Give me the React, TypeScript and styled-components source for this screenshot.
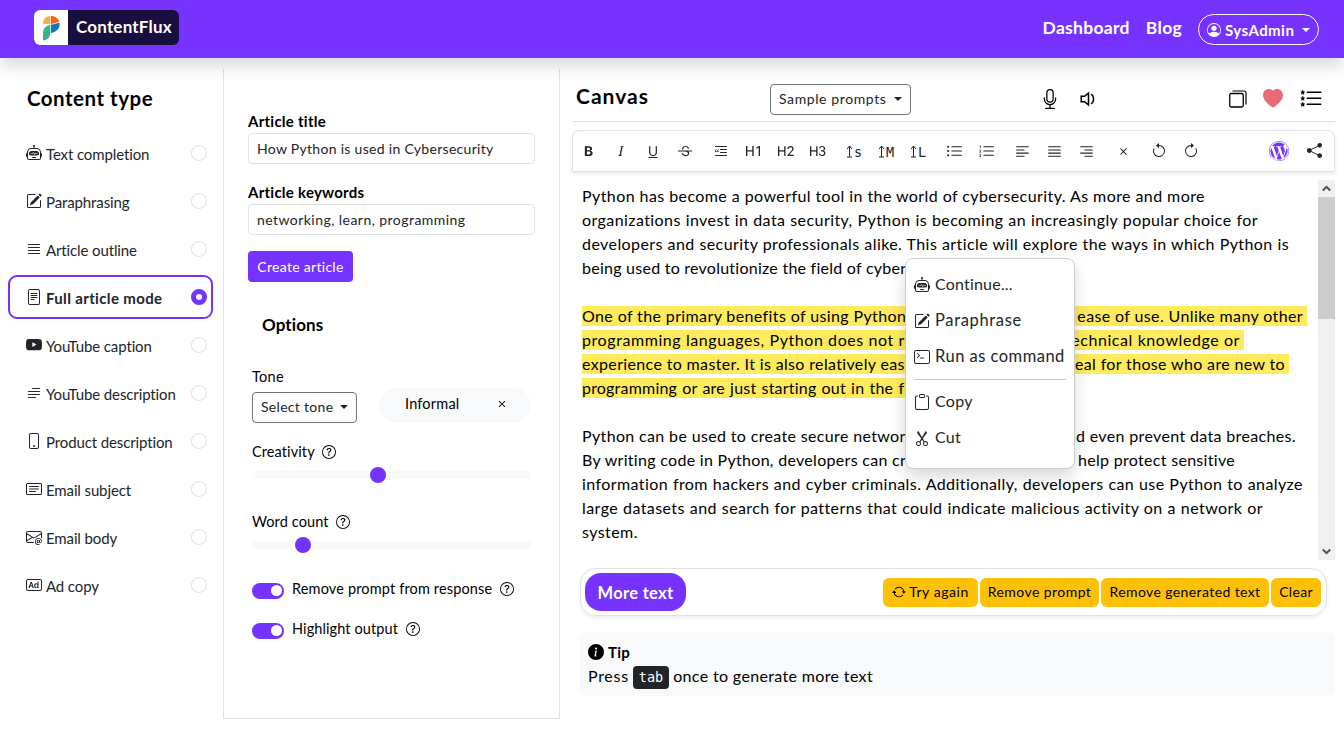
import React from "react";
import styled, { createGlobalStyle, css } from "styled-components";
import {
  BsRobot, BsPencilSquare, BsJustify, BsFileText, BsYoutube, BsTextParagraph, BsPhone, BsCardText,
  BsEnvelopeAt, BsBadgeAd, BsPersonCircle, BsMic, BsHeartFill, BsListStars, BsTypeBold,
  BsTypeItalic, BsTypeUnderline, BsTypeStrikethrough, BsBlockquoteLeft, BsTypeH1, BsTypeH2, BsTypeH3,
  BsListUl, BsListOl, BsTextLeft, BsTextRight, BsX, BsArrowCounterclockwise, BsArrowClockwise,
  BsWordpress, BsShareFill, BsQuestionCircle, BsInfoCircleFill, BsTerminal, BsClipboard, BsScissors,
  BsArrowRepeat,
} from "react-icons/bs";

const purple = "#7633ff";
const line = "#dee2e6";

const GlobalStyle = createGlobalStyle`
  * { box-sizing: border-box; }
  body {
    margin: 0;
    background: #fff;
    color: #000;
    font-family: Lato, "Open Sans", sans-serif;
    font-size: 16px;
    line-height: 24px;
    overflow: hidden;
  }
  svg { display: block; flex: none; }
  button { font: inherit; letter-spacing: inherit; cursor: pointer; }
`;

const Page = styled.div`
  height: 740px;
  display: flex;
  flex-direction: column;
`;

const Text = styled.span<{ $track?: number; $size?: number; $bold?: boolean }>`
  white-space: nowrap;
  letter-spacing: ${(p) => p.$track ?? 0.3}px;
  ${(p) => p.$size && css`font-size: ${p.$size}px;`}
  ${(p) => p.$bold && css`font-weight: 700;`}
`;

const Header = styled.header`
  position: relative;
  z-index: 2;
  height: 58px;
  flex: none;
  display: flex;
  justify-content: space-between;
  padding: 10px 25px 0 34px;
  background: ${purple};
  color: #fff;
  box-shadow: 0 8px 16px rgba(0, 0, 0, 0.15);
`;

const Brand = styled.div`
  display: flex;
  height: 35px;
  border-radius: 6px;
  overflow: hidden;
  background: #190f3f;
`;

const BrandMark = styled.div`
  width: 34px;
  background: #fff;
  display: flex;
  align-items: center;
  justify-content: center;
`;

const BrandName = styled.div`
  width: 111px;
  padding: 5px 0 0 8px;
`;

const Nav = styled.nav`
  display: flex;
  gap: 16px;
  padding-top: 4px;
`;

const NavLink = styled.a`
  line-height: 28px;
`;

const UserPill = styled.button`
  width: 121px;
  height: 31px;
  display: flex;
  align-items: center;
  gap: 4px;
  padding: 0 8px;
  border: 1px solid #f8f9fa;
  border-radius: 16px;
  background: none;
  color: #fff;
`;

const Caret = styled.span`
  margin-left: auto;
  border-top: 4.2px solid currentColor;
  border-left: 4.2px solid transparent;
  border-right: 4.2px solid transparent;
`;

const Columns = styled.div`
  flex: 1;
  display: flex;
  min-height: 0;
`;

const Sidebar = styled.aside`
  width: 223px;
  padding: 27px 10px 0 8px;
`;

const SidebarTitle = styled.h1`
  margin: 0 0 33px 19px;
  font-size: 20.5px;
  line-height: 26px;
  font-weight: 700;
`;

const TypeList = styled.div`
  display: flex;
  flex-direction: column;
  gap: 4px;
  margin-top: -13px;
`;

const TypeRow = styled.div<{ $active?: boolean }>`
  height: 44px;
  display: flex;
  align-items: center;
  padding: 0 4px 0 16px;
  gap: 4px;
  border: 2px solid ${(p) => (p.$active ? purple : "transparent")};
  border-radius: 9px;
  color: #212529;
`;

const TypeLabel = styled.span<{ $active?: boolean }>`
  flex: 1;
  padding-top: 1px;
  font-size: 15px;
  white-space: nowrap;
  letter-spacing: ${(p) => (p.$active ? 0.35 : -0.12)}px;
  font-weight: ${(p) => (p.$active ? 700 : 400)};
`;

const Radio = styled.span<{ $active?: boolean }>`
  width: 16px;
  height: 16px;
  border-radius: 50%;
  border: ${(p) => (p.$active ? `5px solid ${purple}` : `1px solid ${line}`)};
  background: #fff;
`;

const Settings = styled.section`
  width: 337px;
  height: 650px;
  margin-top: 11px;
  padding: 42px 24px 0;
  border: 1px solid ${line};
  border-top: 0;
`;

const FieldLabel = styled.label`
  display: block;
  padding-bottom: 1px;
  font-size: 15px;
  line-height: 21px;
  font-weight: 700;
  letter-spacing: 0.25px;
`;

const Field = styled.div`
  height: 31px;
  margin-bottom: 18px;
  padding: 0 8px;
  border: 1px solid ${line};
  border-radius: 4px;
  font-size: 14px;
  line-height: 30px;
  color: #212529;
`;

const PrimaryButton = styled.button`
  display: block;
  width: 105px;
  height: 31px;
  margin-top: -2px;
  padding: 0;
  border: 0;
  border-radius: 4px;
  background: ${purple};
  color: #fff;
`;

const OptionsTitle = styled.h2`
  margin: 30px 0 0 14px;
  font-size: 17px;
  line-height: 26px;
`;

const Options = styled.div`
  padding: 28px 4px 0;
`;

const OptionLine = styled.div<{ $h: number; $mt?: number }>`
  display: flex;
  align-items: center;
  gap: 7px;
  height: ${(p) => p.$h}px;
  margin-top: ${(p) => p.$mt ?? 0}px;
`;

const ToneRow = styled.div`
  display: flex;
  gap: 22px;
  height: 39px;
`;

const Dropdown = styled.button<{ $w: number }>`
  width: ${(p) => p.$w}px;
  height: 31px;
  display: flex;
  align-items: center;
  padding: 0 8px 2px;
  border: 1px solid #6c757d;
  border-radius: 4px;
  background: #fff;
  color: #212529;
`;

const ToneSelect = styled.div`
  padding-top: 4px;
`;

const ToneChip = styled.div`
  width: 152px;
  height: 35px;
  display: flex;
  align-items: center;
  justify-content: space-between;
  padding: 0 22px 3px 26px;
  border-radius: 18px;
  background: #f8f9fa;
`;

const Slider = styled.div`
  height: 16px;
  display: flex;
  align-items: center;
`;

const Track = styled.div`
  width: 279px;
  height: 8px;
  display: flex;
  align-items: center;
  border-radius: 4px;
  background: #f8f9fa;
`;

const Thumb = styled.span<{ $at: number }>`
  width: 16px;
  height: 16px;
  margin-left: ${(p) => p.$at}px;
  border-radius: 50%;
  background: ${purple};
`;

const Toggles = styled.div`
  padding-top: 16px;
`;

const ToggleRow = styled.div`
  display: flex;
  align-items: center;
  height: 40px;
  gap: 8px;
`;

const Toggle = styled.span`
  width: 32px;
  height: 16px;
  margin-top: 3px;
  padding: 2.5px;
  display: flex;
  justify-content: flex-end;
  border-radius: 8px;
  background: ${purple};
  &::after {
    content: "";
    width: 11px;
    height: 11px;
    border-radius: 50%;
    background: #fff;
  }
`;

const Canvas = styled.main`
  position: relative;
  flex: 1;
  min-width: 0;
  padding: 10px 9px 0 12px;
`;

const CanvasHead = styled.div`
  height: 54px;
  display: flex;
  align-items: center;
  padding: 10px 12px 0 4px;
  border-bottom: 1px solid ${line};
`;

const CanvasTitle = styled.h1`
  width: 194px;
  margin: 0;
  padding-bottom: 8px;
  font-size: 21px;
  line-height: 26px;
`;

const HeadIcons = styled.div<{ $gap: number; $ml: string }>`
  display: flex;
  align-items: center;
  gap: ${(p) => p.$gap}px;
  margin-left: ${(p) => p.$ml};
  padding-bottom: 1px;
`;

const Toolbar = styled.div`
  height: 42px;
  margin-top: 8px;
  display: flex;
  align-items: center;
  border: 1px solid ${line};
  border-radius: 8px 8px 0 0;
  box-shadow: 0 2px 4px rgba(0, 0, 0, 0.075);
  color: #212529;
`;

const Tool = styled.span<{ $w: number }>`
  width: ${(p) => p.$w}px;
  display: flex;
  align-items: center;
  justify-content: center;
  gap: 1px;
`;

const SizeLetter = styled.span`
  padding-top: 1px;
  font-family: "DejaVu Sans Mono", monospace;
  font-size: 13.5px;
  line-height: 16px;
`;

const Editor = styled.div`
  height: 380px;
  margin-top: 8px;
  padding: 4px 0 0 10px;
  display: flex;
  justify-content: space-between;
  overflow: hidden;
`;

const Paragraph = styled.div`
  display: flex;
  flex-direction: column;
  margin-bottom: 24px;
`;

const Row = styled.div<{ $w: number; $track?: number }>`
  width: ${(p) => p.$w}px;
  height: 24px;
  display: flex;
  justify-content: space-between;
  white-space: nowrap;
  line-height: 23px;
  letter-spacing: ${(p) => p.$track ?? 0.42}px;
`;

const Stretch = styled.span`
  flex: 1;
  text-align-last: justify;
`;

const Mark = styled.div<{ $w: number }>`
  width: ${(p) => p.$w}px;
  height: 20px;
  margin: 2px 0;
  background: #ffeb5c;
  & > div { height: 20px; line-height: 19px; }
`;

const Scrollbar = styled.div`
  width: 17px;
  height: 380px;
  margin-top: -4px;
  display: flex;
  flex-direction: column;
  align-items: center;
  background: #f0f0f0;
`;

const ScrollThumb = styled.div`
  width: 17px;
  height: 122px;
  background: #cdcdcd;
`;

const ScrollArrow = styled.div<{ $bottom?: boolean }>`
  height: 17px;
  display: flex;
  align-items: center;
  margin-top: ${(p) => (p.$bottom ? "auto" : "0")};
`;

const Actions = styled.div`
  width: 747px;
  height: 48px;
  margin: 8px 0 0 8px;
  padding: 0 5px 0 4px;
  display: flex;
  align-items: center;
  gap: 2px;
  border: 1px solid ${line};
  border-radius: 16px;
  box-shadow: 0 2px 4px rgba(0, 0, 0, 0.075);
`;

const MoreButton = styled.button`
  width: 101px;
  height: 38px;
  margin-right: auto;
  padding: 1px 0 0;
  border: 0;
  border-radius: 16px;
  background: ${purple};
  color: #fff;
`;

const WarnButton = styled.button<{ $w: number }>`
  width: ${(p) => p.$w}px;
  height: 29px;
  display: flex;
  align-items: center;
  justify-content: center;
  gap: 3px;
  padding: 0;
  border: 0;
  border-radius: 6px;
  background: #ffc107;
  color: #000;
`;

const Tip = styled.div`
  height: 64px;
  margin: 16px 0 0 8px;
  padding: 8px;
  border-radius: 6px;
  background: #f8f9fa;
`;

const TipLine = styled.div`
  display: flex;
  align-items: center;
  gap: 4px;
  height: 24px;
`;

const Kbd = styled.kbd`
  height: 23px;
  margin-top: 2px;
  padding: 0 6px;
  border-radius: 4px;
  background: #212529;
  color: #fff;
  font-family: "DejaVu Sans Mono", monospace;
  font-size: 13.5px;
  line-height: 23px;
`;

const Menu = styled.div`
  position: absolute;
  left: 345px;
  top: 200px;
  width: 170px;
  height: 211px;
  padding: 8px;
  border: 1px solid #ccc;
  border-radius: 8px;
  background: #fff;
  color: #212529;
  box-shadow: 0 8px 16px rgba(0, 0, 0, 0.15);
`;

const MenuItem = styled.div`
  height: 36px;
  display: flex;
  align-items: center;
  gap: 5px;
  & > span { padding-bottom: 2px; }
`;

const MenuRule = styled.hr`
  height: 1px;
  margin: 4px 0;
  border: 0;
  background: #c4c5c6;
`;

const Logo = () => (
  <svg width="18" height="26" viewBox="0 0 18 26">
    <path d="M1 9C1 4 4 1 8.300 1v8z" fill="#f9b03c" />
    <path d="M9 1c4.500 0 7.500 2.500 8.300 6L9 9z" fill="#f4671f" />
    <path d="M9 9.800l8.500-2.100C18.300 13 14.500 17.500 9 18z" fill="#1a73b8" />
    <path d="M8.300 10v8c0 4-2.500 7-7.300 7.500V18c0-4.500 3-7.500 7.300-8z" fill="#35b58c" />
  </svg>
);

const SquareStack = () => (
  <svg width="18" height="18" viewBox="0 0 18 18" fill="none" stroke="#000">
    <rect x=".75" y="3.500" width="13.500" height="13.500" rx="1.500" strokeWidth="1.300" />
    <path d="M3.500 1h11.500a2 2 0 0 1 2 2v11.500" strokeWidth="1.200" />
  </svg>
);

const Speaker = () => (
  <svg width="16" height="16" viewBox="0 0 16 16" fill="none" stroke="#000" strokeWidth="1.500">
    <path d="M1.200 5.300h3.300l4-3.200v11.800l-4-3.200H1.200z" />
    <path d="M11 3.200c3.400 1.800 3.400 7.800 0 9.600" />
  </svg>
);

const SizeArrow = () => (
  <svg width="7" height="13" viewBox="0 0 7 13" fill="none" stroke="currentColor">
    <path d="M3.500 1v11M1 4l2.500-3L6 4M1 12h5" />
  </svg>
);

const Chevron = ({ up }: { up?: boolean }) => (
  <svg width="9" height="7" viewBox="0 0 9 7" fill="none" stroke="#505050" strokeWidth="2">
    <path d={up ? "M.8 5.500l3.700-3.700 3.700 3.700" : "M.8 1.500l3.700 3.700 3.700-3.700"} />
  </svg>
);

const types = [
  { label: "Text completion", Icon: BsRobot },
  { label: "Paraphrasing", Icon: BsPencilSquare },
  { label: "Article outline", Icon: BsJustify },
  { label: "Full article mode", Icon: BsFileText, active: true },
  { label: "YouTube caption", Icon: BsYoutube },
  { label: "YouTube description", Icon: BsTextParagraph },
  { label: "Product description", Icon: BsPhone },
  { label: "Email subject", Icon: BsCardText },
  { label: "Email body", Icon: BsEnvelopeAt },
  { label: "Ad copy", Icon: BsBadgeAd },
];

const textTools = [
  BsTypeBold, BsTypeItalic, BsTypeUnderline, BsTypeStrikethrough,
];

export default function App() {
  return (
    <Page>
      <GlobalStyle />
      <Header>
        <Brand>
          <BrandMark><Logo /></BrandMark>
          <BrandName><Text $bold $size={17} $track={0.2}>ContentFlux</Text></BrandName>
        </Brand>
        <Nav>
          <NavLink><Text $bold $size={17.500}>Dashboard</Text></NavLink>
          <NavLink><Text $bold $size={17.500}>Blog</Text></NavLink>
          <UserPill>
            <BsPersonCircle size={14} />
            <Text $bold $size={15} $track={0.45}>SysAdmin</Text>
            <Caret />
          </UserPill>
        </Nav>
      </Header>
      <Columns>
        <Sidebar>
          <SidebarTitle><Text $track={0.5}>Content type</Text></SidebarTitle>
          <TypeList>
            {types.map(({ label, Icon, active }) => (
              <TypeRow key={label} $active={active}>
                <Icon size={16} />
                <TypeLabel $active={active}>{label}</TypeLabel>
                <Radio $active={active} />
              </TypeRow>
            ))}
          </TypeList>
        </Sidebar>
        <Settings>
          <FieldLabel>Article title</FieldLabel>
          <Field><Text>How Python is used in Cybersecurity</Text></Field>
          <FieldLabel>Article keywords</FieldLabel>
          <Field><Text $track={0.45}>networking, learn, programming</Text></Field>
          <PrimaryButton><Text $size={14}>Create article</Text></PrimaryButton>
          <OptionsTitle><Text $track={0.1}>Options</Text></OptionsTitle>
          <Options>
            <OptionLine $h={22}><Text $size={14.500}>Tone</Text></OptionLine>
            <ToneRow>
              <ToneSelect>
                <Dropdown $w={105}><Text $size={14}>Select tone</Text><Caret /></Dropdown>
              </ToneSelect>
              <ToneChip><Text $size={14.500} $track={0.2}>Informal</Text><BsX size={14} /></ToneChip>
            </ToneRow>
            <OptionLine $h={30} $mt={10}><Text $size={14.500} $track={0.1}>Creativity</Text><BsQuestionCircle size={14} /></OptionLine>
            <Slider><Track><Thumb $at={118} /></Track></Slider>
            <OptionLine $h={30} $mt={24}><Text $size={14.500} $track={0.1}>Word count</Text><BsQuestionCircle size={14} /></OptionLine>
            <Slider><Track><Thumb $at={43} /></Track></Slider>
            <Toggles>
              <ToggleRow><Toggle /><Text $size={14.500} $track={0.15}>Remove prompt from response</Text><BsQuestionCircle size={14} /></ToggleRow>
              <ToggleRow><Toggle /><Text $size={14.500} $track={0.1}>Highlight output</Text><BsQuestionCircle size={14} /></ToggleRow>
            </Toggles>
          </Options>
        </Settings>
        <Canvas>
          <CanvasHead>
            <CanvasTitle><Text $track={1}>Canvas</Text></CanvasTitle>
            <Dropdown $w={141}><Text $size={14} $track={0.6}>Sample prompts</Text><Caret /></Dropdown>
            <HeadIcons $gap={20} $ml="129px">
              <BsMic size={20} />
              <Speaker />
            </HeadIcons>
            <HeadIcons $gap={16} $ml="auto">
              <SquareStack />
              <BsHeartFill size={20} color="#e86a78" />
              <BsListStars size={24} />
            </HeadIcons>
          </CanvasHead>
          <Toolbar>
            {textTools.map((Icon, i) => <Tool key={i} $w={32}><Icon size={16} /></Tool>)}
            <Tool $w={40}><BsBlockquoteLeft size={16} /></Tool>
            <Tool $w={25}><BsTypeH1 size={16} /></Tool>
            <Tool $w={39}><BsTypeH2 size={16} /></Tool>
            <Tool $w={25}><BsTypeH3 size={16} /></Tool>
            <Tool $w={8} />
            {["s", "M", "L"].map((s) => (
              <Tool key={s} $w={32}><SizeArrow /><SizeLetter>{s}</SizeLetter></Tool>
            ))}
            <Tool $w={40}><BsListUl size={17} /></Tool>
            <Tool $w={24}><BsListOl size={17} /></Tool>
            <Tool $w={48}><BsTextLeft size={17} /></Tool>
            <Tool $w={16}><BsJustify size={17} /></Tool>
            <Tool $w={48}><BsTextRight size={17} /></Tool>
            <Tool $w={26}><BsX size={15} /></Tool>
            <Tool $w={46}><BsArrowCounterclockwise size={16} /></Tool>
            <Tool $w={18}><BsArrowClockwise size={16} /></Tool>
            <HeadIcons $gap={18} $ml="auto">
              <BsWordpress size={20} color={purple} />
              <BsShareFill size={15} />
            </HeadIcons>
            <Tool $w={12} />
          </Toolbar>
          <Editor>
            <div>
              <Paragraph>
                <Row $w={622}><Stretch>Python has become a powerful tool in the world of cybersecurity. As more and more</Stretch></Row>
                <Row $w={676}><Stretch>organizations invest in data security, Python is becoming an increasingly popular choice for</Stretch></Row>
                <Row $w={707}><Stretch>developers and security professionals alike. This article will explore the ways in which Python is</Stretch></Row>
                <Row $w={383} $track={0.25}><Stretch>being used to revolutionize the field of cybersecurity.</Stretch></Row>
              </Paragraph>
              <Paragraph>
                <Mark $w={725}><Row $w={721} $track={0.38}><span>One of the primary benefits of using Python</span><span>is ease of use. Unlike many other</span></Row></Mark>
                <Mark $w={662}><Row $w={658} $track={0.58}><span>programming languages, Python does not rely</span><span>technical knowledge or</span></Row></Mark>
                <Mark $w={707}><Row $w={703} $track={0.35}><span>experience to master. It is also relatively easy</span><span>ideal for those who are new to</span></Row></Mark>
                <Mark $w={363}><Row $w={352} $track={0.2}><Stretch>programming or are just starting out in the field.</Stretch></Row></Mark>
              </Paragraph>
              <Paragraph>
                <Row $w={714} $track={0.35}><span>Python can be used to create secure networks</span><span>and even prevent data breaches.</span></Row>
                <Row $w={653} $track={0.3}><span>By writing code in Python, developers can create apps</span><span>to help protect sensitive</span></Row>
                <Row $w={721}><Stretch>information from hackers and cyber criminals. Additionally, developers can use Python to analyze</Stretch></Row>
                <Row $w={681}><Stretch>large datasets and search for patterns that could indicate malicious activity on a network or</Stretch></Row>
                <Row $w={56}><span>system.</span></Row>
              </Paragraph>
            </div>
            <Scrollbar>
              <ScrollArrow><Chevron up /></ScrollArrow>
              <ScrollThumb />
              <ScrollArrow $bottom><Chevron /></ScrollArrow>
            </Scrollbar>
          </Editor>
          <Actions>
            <MoreButton><Text $bold $size={16.500}>More text</Text></MoreButton>
            <WarnButton $w={95}><BsArrowRepeat size={14} /><Text $size={14} $track={0.55}>Try again</Text></WarnButton>
            <WarnButton $w={119}><Text $size={14} $track={0.45}>Remove prompt</Text></WarnButton>
            <WarnButton $w={168}><Text $size={14} $track={0.4}>Remove generated text</Text></WarnButton>
            <WarnButton $w={50}><Text $size={14}>Clear</Text></WarnButton>
          </Actions>
          <Tip>
            <TipLine><BsInfoCircleFill size={16} /><Text $bold $size={15}>Tip</Text></TipLine>
            <TipLine><Text $track={0.7}>Press</Text><Kbd>tab</Kbd><Text $track={0.35}>once to generate more text</Text></TipLine>
          </Tip>
          <Menu>
            <MenuItem><BsRobot /><Text $track={0.2}>Continue...</Text></MenuItem>
            <MenuItem><BsPencilSquare /><Text $size={16.500} $track={0.65}>Paraphrase</Text></MenuItem>
            <MenuItem><BsTerminal /><Text $size={16.500} $track={0.48}>Run as command</Text></MenuItem>
            <MenuRule />
            <MenuItem><BsClipboard /><Text>Copy</Text></MenuItem>
            <MenuItem><BsScissors /><Text>Cut</Text></MenuItem>
          </Menu>
        </Canvas>
      </Columns>
    </Page>
  );
}
